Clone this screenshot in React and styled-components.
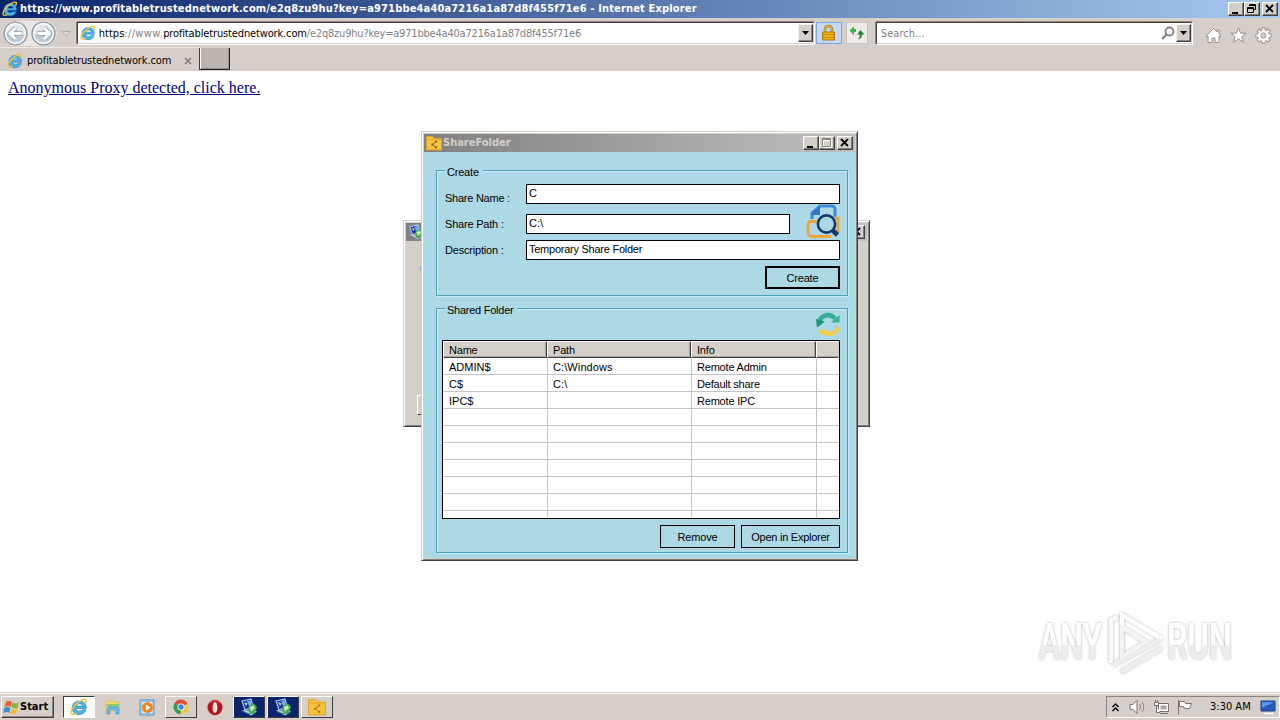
import React from 'react';
import styled, { createGlobalStyle } from 'styled-components';

const GlobalStyle = createGlobalStyle`
  * {
    box-sizing: border-box;
  }
  body {
    margin: 0;
    overflow: hidden;
    background: #fff;
  }
`;

const tahoma = '"DejaVu Sans Condensed", "DejaVu Sans", sans-serif';
const msSans = '"Liberation Sans", Arial, sans-serif';

const Screen = styled.div`
  position: relative;
  width: 1280px;
  height: 720px;
  display: flex;
  flex-direction: column;
  overflow: hidden;
  font-family: ${tahoma};
  font-size: 11px;
  color: #000;
`;

const Text = styled.span`
  font-family: ${tahoma};
  font-size: 11px;
  font-weight: ${(props) => (props.$bold ? 700 : 400)};
  letter-spacing: ${(props) => props.$spacing || 0}px;
  color: ${(props) => props.$color || '#000'};
  line-height: 14px;
  white-space: pre;
`;

const SansText = styled(Text)`
  font-family: ${msSans};
  letter-spacing: ${(props) => (props.$spacing === undefined ? -0.2 : props.$spacing)}px;
`;

const TitleBar = styled.div`
  display: flex;
  align-items: center;
  height: 18px;
  flex: none;
  padding: 0 2px 0 2px;
  gap: ${(props) => (props.$inactive ? 1 : 2)}px;
  background: ${(props) =>
    props.$inactive
      ? 'linear-gradient(90deg, #808080, #c0c0c0)'
      : 'linear-gradient(90deg, #0a246a, #a6caf0)'};
`;

const Spacer = styled.div`
  flex: 1;
`;

const WindowButtons = styled.div`
  display: flex;
`;

const CaptionButton = styled.div`
  width: 16px;
  height: 14px;
  display: flex;
  margin-left: ${(props) => props.$gap || 0}px;
  background: #d4d0c8;
  border: 1px solid;
  border-color: #fff #404040 #404040 #fff;
  box-shadow: inset -1px -1px #808080;
`;

const Toolbar = styled.div`
  display: flex;
  flex: none;
  height: 29px;
  padding: 4px 8px 0 3px;
  background: #d6cec9;
`;

const NavButtons = styled.div`
  width: 74px;
  height: 25px;
  margin-top: -1px;
`;

const Field = styled.div`
  display: flex;
  align-items: center;
  width: ${(props) => props.$width}px;
  height: 22px;
  margin-right: ${(props) => props.$gap}px;
  padding-left: ${(props) => props.$pad}px;
  background: #fff;
  border: 1px solid;
  border-color: #404040 #d6cec9 #d6cec9 #404040;
  box-shadow: 0 -1px #8b8680, -1px 0 #8b8680, 1px 1px #fff;
`;

const Address = styled.div`
  display: flex;
  padding: 2px 0 0 ${(props) => props.$indent || 0}px;
`;

const DropButton = styled.div`
  width: 15px;
  height: 18px;
  display: flex;
  align-items: center;
  justify-content: center;
  background: #d6cec9;
  border: 1px solid;
  border-color: #f4f0ec #404040 #404040 #f4f0ec;
  box-shadow: inset -1px -1px #8b8680;
`;

const BarButton = styled.div`
  width: ${(props) => props.$width}px;
  height: 22px;
  display: flex;
  align-items: center;
  justify-content: center;
  margin-right: ${(props) => props.$gap}px;
  background: ${(props) => (props.$active ? '#c3daf8' : '#edeae7')};
  border: 1px solid ${(props) => (props.$active ? '#7da7e4' : '#c8c4c0')};
`;

const Actions = styled.div`
  display: flex;
  align-items: center;
  gap: 8px;
  height: 26px;
  padding-left: 13px;
`;

const TabStrip = styled.div`
  display: flex;
  flex: none;
  height: 24px;
  background: #d6cec9;
`;

const Tab = styled.div`
  display: flex;
  align-items: center;
  width: 199px;
  padding: 2px 7px 0 7px;
  gap: 4px;
  border-top: 1px solid #efeae6;
`;

const NewTab = styled.div`
  width: 31px;
  height: 22px;
  margin-top: 1px;
  background: #bdb5b0;
  border-left: 1px solid #404040;
  border-right: 1px solid #202020;
  border-bottom: 1px solid #202020;
  box-shadow: inset 1px 0 #fff, inset -1px -1px #96908b;
`;

const Page = styled.div`
  flex: 1;
  padding: 8px 8px;
  background: #fff;
`;

const ProxyLink = styled.a`
  font-family: "Liberation Serif", "Times New Roman", serif;
  font-size: 16px;
  line-height: 18px;
  color: #000080;
  text-decoration: underline;
`;

const BackWindow = styled.div`
  position: absolute;
  left: 403px;
  top: 220px;
  width: 467px;
  height: 207px;
  display: flex;
  flex-direction: column;
  padding: 2px;
  background: #d4d0c8;
  border: 1px solid;
  border-color: #d4d0c8 #404040 #404040 #d4d0c8;
  box-shadow: inset 1px 1px #fff, inset -1px -1px #808080;
`;

const BackBody = styled.div`
  flex: 1;
  display: flex;
  flex-direction: column;
  justify-content: space-between;
  padding: 25px 12px 9px 11px;
`;

const BackButton = styled.div`
  width: 75px;
  height: 20px;
  border: 1px solid;
  border-color: #fff #404040 #404040 #fff;
`;

const Dialog = styled.div`
  position: absolute;
  left: 421px;
  top: 131px;
  width: 437px;
  height: 430px;
  display: flex;
  flex-direction: column;
  padding: 2px;
  background: #d4d0c8;
  border: 1px solid;
  border-color: #d4d0c8 #404040 #404040 #d4d0c8;
  box-shadow: inset 1px 1px #fff, inset -1px -1px #808080;
`;

const DialogBody = styled.div`
  flex: 1;
  display: flex;
  flex-direction: column;
  gap: 12px;
  padding: 18px 8px 0 12px;
  background: #add8e6;
`;

const Group = styled.div`
  position: relative;
  width: 412px;
  height: ${(props) => props.$height}px;
  display: flex;
  flex-direction: column;
  border: 1px solid #4fa0b8;
  box-shadow: inset 1px 1px #c2ecf8, 1px 1px #c2ecf8;
`;

const Legend = styled.div`
  position: absolute;
  left: 8px;
  top: -6px;
  height: 14px;
  display: flex;
  padding: 0 4px 0 2px;
  background: #add8e6;
`;

const Form = styled.div`
  display: flex;
  flex-direction: column;
  padding: 13px 7px 0 8px;
`;

const FormRow = styled.div`
  display: flex;
  align-items: flex-start;
  height: ${(props) => props.$height}px;
`;

const FieldLabel = styled.div`
  width: 81px;
  padding-top: ${(props) => props.$top}px;
  display: flex;
`;

const Input = styled.div`
  display: flex;
  width: ${(props) => props.$width}px;
  height: 20px;
  padding: 1px 2px;
  background: #fff;
  border: 1px solid #000;
`;

const FolderIcon = styled.svg`
  margin: -10px 0 0 16px;
  flex: none;
`;

const Buttons = styled.div`
  display: flex;
  justify-content: flex-end;
  gap: 6px;
`;

const Button = styled.div`
  width: ${(props) => props.$width}px;
  height: 23px;
  display: flex;
  align-items: center;
  justify-content: center;
  border: ${(props) => (props.$default ? 2 : 1)}px solid #000;
`;

const SharePanel = styled.div`
  display: flex;
  flex-direction: column;
  padding: 3px 7px 0 5px;
`;

const RefreshRow = styled.div`
  display: flex;
  justify-content: flex-end;
  height: 28px;
`;

const Table = styled.div`
  height: 179px;
  margin-bottom: 6px;
  overflow: hidden;
  background: #fff;
  border: 1px solid #000;
`;

const HeaderRow = styled.div`
  display: grid;
  grid-template-columns: 104px 144px 125px 1fr;
  height: 17px;
`;

const HeaderCell = styled.div`
  display: flex;
  padding: 1px 0 0 5px;
  background: #d4d0c8;
  border: 1px solid;
  border-color: #fff #404040 #404040 #fff;
  box-shadow: inset -1px -1px #a8a49c;
  &:last-child {
    border-right-color: #d4d0c8;
    box-shadow: inset 0 -1px #a8a49c;
  }
`;

const Row = styled.div`
  display: grid;
  grid-template-columns: 105px 144px 125px 1fr;
  height: 17px;
  border-bottom: 1px solid #c4c4c4;
`;

const Cell = styled.div`
  display: flex;
  padding: 2px 0 0 6px;
  border-right: 1px solid #c4c4c4;
  &:nth-child(n + 2) {
    padding-left: 5px;
  }
  &:last-child {
    border-right: none;
  }
`;

const Watermark = styled.svg`
  position: absolute;
  left: 1030px;
  top: 603px;
`;

const TaskBar = styled.div`
  display: flex;
  flex: none;
  align-items: flex-start;
  height: 28px;
  padding: 3px 0 0 1px;
  background: #d6cec9;
  border-top: 1px solid #d6cec9;
  box-shadow: inset 0 1px #fff;
`;

const StartButton = styled.div`
  display: flex;
  align-items: center;
  width: 53px;
  height: 22px;
  padding-left: 1px;
  margin-right: 9px;
  border: 1px solid;
  border-color: #fff #404040 #404040 #fff;
  box-shadow: inset -1px -1px #8b8680;
`;

const TaskItem = styled.div`
  display: flex;
  align-items: center;
  justify-content: center;
  width: 32px;
  height: 22px;
  margin-right: 2px;
  background: ${(props) => props.$bg || 'transparent'};
  border: 1px solid;
  border-color: ${(props) => {
    if (props.$plain) return 'transparent';
    return props.$pressed ? '#404040 #fff #fff #404040' : '#fff #404040 #404040 #fff';
  }};
`;

const Tray = styled.div`
  display: flex;
  align-items: center;
  width: 174px;
  height: 22px;
  padding-left: 5px;
  border: 1px solid;
  border-color: #8b8680 #fff #fff #8b8680;
`;

const TrayItem = styled.div`
  display: flex;
  width: ${(props) => props.$width}px;
`;

const IeLogo = ({ size = 16 }) => (
  <svg width={size} height={size} viewBox="0 0 16 16">
    <path
      d="M14.500 9.300H5.400c.3 1.600 1.500 2.400 3 2.400 1.200 0 2-.4 2.600-1.200h3.200c-.9 2.700-3.100 4.300-6 4.300-3.700 0-6.300-2.500-6.300-6S4.500 2.600 8.200 2.600c4 0 6.600 2.700 6.300 6.700zM5.500 7.200h5.700c-.2-1.300-1.300-2.100-2.800-2.100S5.800 5.900 5.500 7.200z"
      fill="#45b4ee"
      stroke="#1f74bc"
      strokeWidth=".5"
    />
    <path
      d="M13.500 4.600C15.400 1.300 13.900.2 10.500 1.900 6 4.200.8 9.700 1 13c.2 2 2.300 1.600 4.500.4"
      fill="none"
      stroke="#f3c230"
      strokeWidth="1.400"
    />
  </svg>
);

const Minimize = () => (
  <svg width="14" height="12">
    <path d="M3 9h6v2H3z" fill="#000" />
  </svg>
);

const Maximize = () => (
  <svg width="14" height="12">
    <path d="M3.500 2.500h8v8h-8zM3 3.500h9" fill="none" stroke="#fff" />
    <path d="M2.500 1.500h8v8h-8zM2 2.500h9" fill="none" stroke="#808080" />
  </svg>
);

const Restore = () => (
  <svg width="14" height="12">
    <path d="M4.500 1.500h6v5h-2M4 2.500h7M2.500 4.500h6v5h-6zM2 5.500h7" fill="none" stroke="#000" />
  </svg>
);

const Close = () => (
  <svg width="14" height="12">
    <path d="M3 2l7 7M10 2L3 9" stroke="#000" strokeWidth="1.800" />
  </svg>
);

const DownArrow = () => (
  <svg width="7" height="4">
    <path d="M0 0h7L3.500 4z" fill="#000" />
  </svg>
);

const BackForward = () => (
  <svg width="72" height="26" viewBox="0 0 72 26">
    <path d="M12 0h28c8 0 14 6 14 12s-6 13-14 13H12C4 25 0 18 0 12S4 0 12 0z" fill="#e9e5e2" />
    {[12.500, 40.500].map((cx) => (
      <g key={cx}>
        <circle cx={cx} cy="12.500" r="11.500" fill="#c0ceda" stroke="#8e9196" strokeWidth="1.200" />
        <path d={`M${cx - 10} 12.500a10 10 0 0 1 20 0q-9 3-20 0z`} fill="#dfe7ed" />
        <circle cx={cx} cy="12.500" r="9.900" fill="none" stroke="#fff" strokeWidth="1.200" />
      </g>
    ))}
    <path d="M19 12.500H7.500M12.500 7L7 12.500l5.500 5.500" fill="none" stroke="#8fa0ad" strokeWidth="4.600" />
    <path d="M18.500 12.500H7.500M12.500 7L7 12.500l5.500 5.500" fill="none" stroke="#fff" strokeWidth="3" />
    <path d="M34 12.500h12M41 7l5.500 5.500-5.500 5.500" fill="none" stroke="#8fa0ad" strokeWidth="4.600" />
    <path d="M34.500 12.500h12M41 7l5.500 5.500-5.500 5.500" fill="none" stroke="#fff" strokeWidth="3" />
    <path d="M59 10.500h8l-4 4.500z" fill="#e2dedb" stroke="#b4afab" />
  </svg>
);

const Lock = () => (
  <svg width="15" height="18">
    <path d="M4 8V5.500a3.500 3.500 0 0 1 7 0V8" fill="none" stroke="#a8780c" strokeWidth="2.600" />
    <path d="M4 8V5.500a3.500 3.500 0 0 1 7 0V8" fill="none" stroke="#f0c95a" strokeWidth="1" />
    <path d="M1.500 8h12v8h-12z" fill="#f0b010" stroke="#b07b10" />
    <path d="M2 10.500h11M2 13.500h11" stroke="#c88a0c" />
  </svg>
);

const RefreshArrows = () => (
  <svg width="16" height="16">
    <path d="M5 1L.5 5.500 5 10V7h2V4H5z" fill="#3fae4c" />
    <path d="M11.500 5l4 4.500H13c0 3-1.500 4.500-4.500 5 2-1.200 2.200-2.500 2-5H8z" fill="#1f8a30" />
  </svg>
);

const Magnifier = () => (
  <svg width="15" height="15">
    <circle cx="8.500" cy="5.500" r="4" fill="none" stroke="#85807c" strokeWidth="1.800" />
    <path d="M5.500 8.500L1 13" stroke="#85807c" strokeWidth="2.200" />
  </svg>
);

const Home = () => (
  <svg width="17" height="17">
    <path
      d="M8.500 1.500L12 5V3h2v4l2 2-1 1-1-1v6.500h-4V11H7v4.500H3V9l-1 1-1-1z"
      fill="#fff"
      stroke="#96908c"
    />
  </svg>
);

const Star = () => (
  <svg width="17" height="17">
    <path
      d="M8.500 1l2 5.200h5.700l-4.500 3.500 1.700 5.600-4.900-3.400-4.900 3.400 1.700-5.600L.8 6.200h5.700z"
      fill="#fff"
      stroke="#96908c"
    />
  </svg>
);

const teeth = [0, 45, 90, 135, 180, 225, 270, 315];

const Gear = () => (
  <svg width="17" height="17" viewBox="0 0 17 17">
    {teeth.map((a) => (
      <path key={a} d="M6.800 4V.8h3.400V4" fill="#fff" stroke="#96908c" transform={`rotate(${a} 8.500 8.500)`} />
    ))}
    <circle cx="8.500" cy="8.500" r="5.300" fill="#fff" />
    <circle cx="8.500" cy="8.500" r="2.600" fill="#d6cec9" stroke="#96908c" />
  </svg>
);

const ShareFolderIcon = ({ size = 16, mark = '#6e5520' }) => (
  <svg width={size} height={size} viewBox="0 0 16 16">
    <path d="M.5 1.500h6l1.500 2h7.500v11.500H.5z" fill="#f7c23c" stroke="#dfa021" strokeWidth=".8" />
    <path d="M1 4.500h14" stroke="#dfa021" strokeWidth=".6" />
    <path d="M10 6.500L6.500 9.500 10 12.500" fill="none" stroke={mark} strokeWidth=".8" />
    <path d="M9.200 5.700h1.700v1.700H9.200zM5.500 8.600h1.800v1.800H5.500zM9.200 11.600h1.700v1.700H9.200z" fill={mark} />
  </svg>
);

const ComputerIcon = ({ size = 18 }) => (
  <svg width={size} height={size} viewBox="0 0 18 18">
    <path d="M2 3l9-2 2 8-8 3z" fill="#1233c4" stroke="#b8c8dc" strokeWidth="1.200" />
    <path d="M7 3l3.500-.8L12 8.500l-2.500.8z" fill="#6cb0f8" />
    <path d="M4 4l3.500 1.500L6 8z" fill="#e6e04c" />
    <path d="M1.500 12l5.500.5 5-1.500 5 2.500-6 4z" fill="#c4d0dc" />
    <path d="M9 7.500l5-2 3 3.500-2 6-4.500 1.500-2.500-4z" fill="#46a850" />
    <path d="M9.500 9l4-1.500 1.500 2.500-4 3.500z" fill="#c4f0b0" />
    <path d="M3 13.500l7 2.500" stroke="#5078a8" />
  </svg>
);

const BrowseIcon = () => (
  <FolderIcon width="34" height="36" viewBox="0 0 34 36">
    <path d="M6 15V9l8-7h11c3 0 4 1 4 4v7" fill="none" stroke="#3c8bd8" strokeWidth="3" />
    <path d="M4.500 11L14 2v9z" fill="#2b75cc" />
    <path
      d="M11 17.500H5c-2.500 0-3 1-3 3v7c0 4 1 5 5 5h18M29 14h3v15"
      fill="none"
      stroke="#f2a33c"
      strokeWidth="2.800"
    />
    <circle cx="20.500" cy="20" r="8.600" fill="#add8e6" stroke="#16366e" strokeWidth="2.600" />
    <path d="M26.500 26l5 5" stroke="#16366e" strokeWidth="4.600" />
  </FolderIcon>
);

const SyncIcon = () => (
  <svg width="24" height="25" viewBox="0 0 24 25">
    <path d="M3 11C4 4 13 0 19 6.500" fill="none" stroke="#35b095" strokeWidth="4.500" />
    <path d="M23.500 3v7.500H15z" fill="#35b095" />
    <path d="M0 7l1 8.500 8-6z" fill="#159a78" />
    <path d="M22.500 15c-2 6.500-10 8.500-15 5.500" fill="none" stroke="#f0ca4a" strokeWidth="4" />
    <path d="M3 17l9 1-7 5.500z" fill="#f0ca4a" />
  </svg>
);

const AnyRun = () => (
  <Watermark width="225" height="76" viewBox="0 0 225 76">
    <defs>
      <linearGradient id="fade" x1="0" y1="0" x2="0" y2="1">
        <stop offset="0.550" stopColor="#fff" />
        <stop offset="0.560" stopColor="#ededed" />
      </linearGradient>
      <filter id="glow" x="-10%" y="-20%" width="120%" height="140%">
        <feDropShadow dx="0" dy="0" stdDeviation="1.600" floodColor="#000" floodOpacity="0.340" />
      </filter>
    </defs>
    <g filter="url(#glow)">
      <g fill="url(#fade)" fontFamily="Roboto" fontWeight="500" fontSize="50">
        <text x="9" y="56" textLength="63" lengthAdjust="spacingAndGlyphs">ANY</text>
        <text x="137" y="56" textLength="65" lengthAdjust="spacingAndGlyphs">RUN</text>
      </g>
      <g fill="none" strokeWidth="4">
        <path d="M92 50V12l40 24" stroke="#fff" />
        <path d="M81 60V17l7-3" stroke="#fafafa" />
        <path d="M92 24v30l24-15z" stroke="#f4f4f4" />
        <path d="M83 62l48-26M91 69l41-24" stroke="#eee" />
      </g>
    </g>
  </Watermark>
);

const WindowsFlag = () => (
  <svg width="17" height="17" viewBox="0 0 17 17">
    <path d="M3 3q3-2 6 0L8 8Q5 6 1.500 8z" fill="#e8602c" />
    <path d="M9.800 3.500q3 2 6 0L14.500 9q-3 1-6-.8z" fill="#7cb83c" />
    <path d="M1.300 9q3-2 6 0l-1 5q-3-2-6 0z" fill="#3c8ad8" />
    <path d="M8.200 9.500q3 2 6 0L13 14.500q-3 1.500-6 0z" fill="#f4bc28" />
  </svg>
);

const ExplorerIcon = () => (
  <svg width="18" height="18" viewBox="0 0 18 18">
    <path d="M2 3h5l1 1h7v9H2z" fill="#f3d97c" stroke="#d9b650" strokeWidth=".7" />
    <path d="M3 6h12v3H3z" fill="#8cc878" />
    <path d="M3 16v-5q0-2 2-2h8q2 0 2 2v5h-3v-4H6v4z" fill="#68b8e8" stroke="#4c98cc" strokeWidth=".6" />
  </svg>
);

const MediaIcon = () => (
  <svg width="17" height="17" viewBox="0 0 17 17">
    <path d="M1 1h14v15H1z" fill="#c4def4" stroke="#4b94d4" />
    <path d="M3 2.500h11v12H3z" fill="#eef6fc" stroke="#68a8dc" strokeWidth=".6" />
    <circle cx="8.500" cy="8.500" r="5.500" fill="#f08a1c" />
    <path d="M7 5.500v6l4.500-3z" fill="#fff" />
  </svg>
);

const ChromeIcon = () => (
  <svg width="16" height="16" viewBox="0 0 16 16">
    <path d="M8 8L1.500 4.300A7.300 7.300 0 0 1 14.700 5z" fill="#dd4b39" />
    <path d="M8 8l6.700-3A7.300 7.300 0 0 1 7.500 15.300z" fill="#fcc934" />
    <path d="M8 8l-.5 7.300A7.300 7.300 0 0 1 1.500 4.300z" fill="#2f9e4f" />
    <circle cx="8" cy="8" r="3.600" fill="#fff" />
    <circle cx="8" cy="8" r="2.700" fill="#4285f4" />
  </svg>
);

const OperaIcon = () => (
  <svg width="17" height="17" viewBox="0 0 17 17">
    <ellipse cx="8" cy="8.500" rx="7.500" ry="7.800" fill="#b81420" />
    <ellipse cx="8" cy="8.500" rx="2.400" ry="5.500" fill="#efe0dc" />
    <path d="M2.500 4q5-5 11 0" fill="none" stroke="#e46868" />
  </svg>
);

const Chevrons = () => (
  <svg width="7" height="9">
    <path d="M.5 4l3-3 3 3M.5 8l3-3 3 3" fill="none" stroke="#000" strokeWidth="1.400" />
  </svg>
);

const Speaker = () => (
  <svg width="17" height="16">
    <path d="M1 5.500h3l4-4v13l-4-4H1z" fill="#fff" stroke="#77726e" />
    <path d="M10.500 5q2 3 0 6M13 3q3.500 5 0 10" fill="none" stroke="#85807c" />
  </svg>
);

const Network = () => (
  <svg width="17" height="16">
    <path d="M5.500 4.500h10v8h-10zM7 14.500h8" fill="#fff" stroke="#77726e" />
    <path d="M7.500 6.500h6v4h-6z" fill="#aaa5a1" />
    <path d="M1.500 3.500h4v3h-4zM2.500 1v2M4.500 1v2M3.500 7v6.500H7" fill="#fff" stroke="#77726e" />
  </svg>
);

const Flag = () => (
  <svg width="16" height="16">
    <path d="M1.500 1v14M2.500 2.500h5l1 2h6l-2 5H7.500l-1-2h-4z" fill="#fff" stroke="#77726e" />
  </svg>
);

const DesktopIcon = () => (
  <svg width="17" height="15">
    <path d="M1 1h14v10H1z" fill="#245fc0" stroke="#183f80" />
    <path d="M2 2h12L2 8z" fill="#5698e8" />
    <path d="M4 13.500h9" stroke="#fff" strokeWidth="1.500" />
  </svg>
);

const shares = [
  { name: 'ADMIN$', path: 'C:\\Windows', info: 'Remote Admin' },
  { name: 'C$', path: 'C:\\', info: 'Default share' },
  { name: 'IPC$', path: '', info: 'Remote IPC' },
  {},
  {},
  {},
  {},
  {},
  {},
  {},
];

function Browser() {
  return (
    <>
      <TitleBar>
        <IeLogo />
        <Text $bold $color="#fff" $spacing={0.16}>
          https://www.profitabletrustednetwork.com/e2q8zu9hu?key=a971bbe4a40a7216a1a87d8f455f71e6 - Internet Explorer
        </Text>
        <Spacer />
        <WindowButtons>
          <CaptionButton><Minimize /></CaptionButton>
          <CaptionButton><Restore /></CaptionButton>
          <CaptionButton $gap={2}><Close /></CaptionButton>
        </WindowButtons>
      </TitleBar>
      <Toolbar>
        <NavButtons>
          <BackForward />
        </NavButtons>
        <Field $width={739} $gap={2} $pad={2}>
          <IeLogo />
          <Address $indent={3}>
            <Text>https</Text>
            <Text $color="#808080" $spacing={0.35}>://www.</Text>
            <Text $spacing={-0.14}>profitabletrustednetwork.com</Text>
            <Text $color="#808080" $spacing={-0.2}>/e2q8zu9hu?key=a971bbe4a40a7216a1a87d8f455f71e6</Text>
          </Address>
          <Spacer />
          <DropButton><DownArrow /></DropButton>
        </Field>
        <BarButton $width={26} $gap={4} $active><Lock /></BarButton>
        <BarButton $width={22} $gap={8}><RefreshArrows /></BarButton>
        <Field $width={317} $gap={0} $pad={4}>
          <Address>
            <Text $color="#808080" $spacing={0.05}>Search...</Text>
          </Address>
          <Spacer />
          <Magnifier />
          <DropButton><DownArrow /></DropButton>
        </Field>
        <Actions>
          <Home />
          <Star />
          <Gear />
        </Actions>
      </Toolbar>
      <TabStrip>
        <Tab>
          <IeLogo />
          <Text $spacing={-0.12}>profitabletrustednetwork.com</Text>
          <Spacer />
          <svg width="8" height="8">
            <path d="M1 1l6 6M7 1L1 7" stroke="#85807c" strokeWidth="1.700" />
          </svg>
        </Tab>
        <NewTab />
      </TabStrip>
      <Page>
        <ProxyLink>Anonymous Proxy detected, click here.</ProxyLink>
      </Page>
    </>
  );
}

function ShareDialog() {
  return (
    <Dialog>
      <TitleBar $inactive>
        <ShareFolderIcon />
        <Text $bold $color="#d4d0c8">ShareFolder</Text>
        <Spacer />
        <WindowButtons>
          <CaptionButton><Minimize /></CaptionButton>
          <CaptionButton><Maximize /></CaptionButton>
          <CaptionButton $gap={2}><Close /></CaptionButton>
        </WindowButtons>
      </TitleBar>
      <DialogBody>
        <Group $height={126}>
          <Legend><SansText>Create</SansText></Legend>
          <Form>
            <FormRow $height={30}>
              <FieldLabel $top={7}><SansText $spacing={-0.25}>Share Name :</SansText></FieldLabel>
              <Input $width={314}><SansText>C</SansText></Input>
            </FormRow>
            <FormRow $height={26}>
              <FieldLabel $top={3}><SansText>Share Path :</SansText></FieldLabel>
              <Input $width={264}><SansText $spacing={0}>C:\</SansText></Input>
              <BrowseIcon />
            </FormRow>
            <FormRow $height={26}>
              <FieldLabel $top={3}><SansText>Description :</SansText></FieldLabel>
              <Input $width={314}><SansText $spacing={-0.25}>Temporary Share Folder</SansText></Input>
            </FormRow>
            <Buttons>
              <Button $width={75} $default><SansText>Create</SansText></Button>
            </Buttons>
          </Form>
        </Group>
        <Group $height={245}>
          <Legend><SansText $spacing={-0.25}>Shared Folder</SansText></Legend>
          <SharePanel>
            <RefreshRow><SyncIcon /></RefreshRow>
            <Table>
              <HeaderRow>
                <HeaderCell><SansText>Name</SansText></HeaderCell>
                <HeaderCell><SansText>Path</SansText></HeaderCell>
                <HeaderCell><SansText>Info</SansText></HeaderCell>
                <HeaderCell />
              </HeaderRow>
              {shares.map((share, i) => (
                <Row key={i}>
                  <Cell><SansText $spacing={0}>{share.name}</SansText></Cell>
                  <Cell><SansText $spacing={0.1}>{share.path}</SansText></Cell>
                  <Cell><SansText>{share.info}</SansText></Cell>
                  <Cell />
                </Row>
              ))}
            </Table>
            <Buttons>
              <Button $width={75}><SansText>Remove</SansText></Button>
              <Button $width={99}><SansText $spacing={-0.25}>Open in Explorer</SansText></Button>
            </Buttons>
          </SharePanel>
        </Group>
      </DialogBody>
    </Dialog>
  );
}

function Taskbar() {
  return (
    <TaskBar>
      <StartButton>
        <WindowsFlag />
        <Text $bold>Start</Text>
      </StartButton>
      <TaskItem $bg="#fff" $pressed><IeLogo size={18} /></TaskItem>
      <TaskItem $plain><ExplorerIcon /></TaskItem>
      <TaskItem $plain><MediaIcon /></TaskItem>
      <TaskItem><ChromeIcon /></TaskItem>
      <TaskItem $plain><OperaIcon /></TaskItem>
      <TaskItem $bg="#0a246a"><ComputerIcon /></TaskItem>
      <TaskItem $bg="#0a246a"><ComputerIcon /></TaskItem>
      <TaskItem><ShareFolderIcon size={18} mark="#9a7428" /></TaskItem>
      <Spacer />
      <Tray>
        <TrayItem $width={17}><Chevrons /></TrayItem>
        <TrayItem $width={24}><Speaker /></TrayItem>
        <TrayItem $width={24}><Network /></TrayItem>
        <TrayItem $width={33}><Flag /></TrayItem>
        <TrayItem $width={50}><Text>3:30 AM</Text></TrayItem>
        <DesktopIcon />
      </Tray>
    </TaskBar>
  );
}

export default function App() {
  return (
    <Screen>
      <GlobalStyle />
      <Browser />
      <BackWindow>
        <TitleBar $inactive>
          <ComputerIcon size={16} />
          <Spacer />
          <CaptionButton><Close /></CaptionButton>
        </TitleBar>
        <BackBody>
          <svg width="7" height="5">
            <path d="M1 2.500h6M3.500 0v5" stroke="#9eb0dc" />
          </svg>
          <BackButton />
        </BackBody>
      </BackWindow>
      <ShareDialog />
      <AnyRun />
      <Taskbar />
    </Screen>
  );
}
